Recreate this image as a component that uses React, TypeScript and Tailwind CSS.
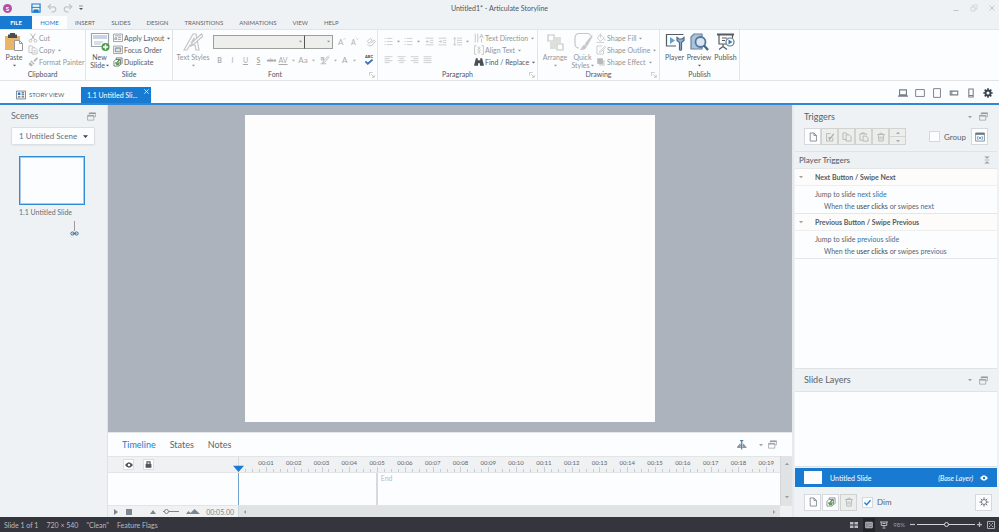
import type { ReactNode } from "react";

interface IconProps {
  children: ReactNode;
  box?: string;
  className?: string;
}

function Icon({ children, box = "0 0 16 16", className = "w-2.5 h-2.5" }: IconProps) {
  return (
    <svg
      viewBox={box}
      className={`shrink-0 ${className}`}
      fill="none"
      stroke="currentColor"
      strokeWidth="1.2"
      aria-hidden="true"
    >
      {children}
    </svg>
  );
}

function Caret({ className = "w-1 h-1" }: { className?: string }) {
  return (
    <svg viewBox="0 0 8 8" className={`shrink-0 ${className}`} fill="currentColor" aria-hidden="true">
      <path d="M0 2h8L4 6.5z" />
    </svg>
  );
}

function FloatIcon() {
  return (
    <Icon className="w-[9px] h-[9px]">
      <path d="M4 1.5h11v7h-2.5M4 1.5v3" />
      <path d="M4 2.5h11" strokeWidth="2" />
      <path d="M1 6h11v8.5H1z" />
      <path d="M1 7h11" strokeWidth="2" />
    </Icon>
  );
}

function PageIcon() {
  return (
    <Icon>
      <path d="M3.5 1.5h6l4 4v9h-10zM9.5 1.5v4h4" />
    </Icon>
  );
}

function TrashIcon() {
  return (
    <Icon>
      <path d="M2 4h12M6 4V2h4v2M3.5 4l1 10.5h7l1-10.5M6.5 7v5M9.5 7v5" />
    </Icon>
  );
}

function DuplicateIcon() {
  return (
    <Icon>
      <path d="M5 4V1.500h9.500V10L12 12.500" />
      <path d="M1.500 7l3-3H12v8l-2.500 2.500h-8z" fill="#fff" />
      <path d="M3 9l2.500 4H10l1-6-4 3-2-2z" fill="#5d9a4f" stroke="none" />
      <path d="M6 9l5-5" stroke="#4f8a45" strokeWidth="2" />
    </Icon>
  );
}

function GearIcon({ solid = false }: { solid?: boolean }) {
  return (
    <Icon className="w-2.5 h-2.5">
      <circle cx="8" cy="8" r="4" strokeWidth={solid ? 3 : 1.5} />
      <path
        d="M8 .5v3M8 12.500v3M.5 8h3M12.500 8h3M2.700 2.700l2.100 2.100M11.200 11.200l2.100 2.100M13.300 2.700l-2.100 2.100M4.800 11.200l-2.100 2.100"
        strokeWidth={solid ? 2.6 : 1.6}
      />
    </Icon>
  );
}

function EyeIcon() {
  return (
    <svg viewBox="0 0 16 12" className="w-2 h-1.5 shrink-0" fill="currentColor" aria-hidden="true">
      <path fillRule="evenodd" d="M0 6Q8-5 16 6Q8 17 0 6zM8 3.500a2.500 2.500 0 100 5 2.500 2.500 0 000-5z" />
    </svg>
  );
}

function RibbonGroup({
  label,
  width,
  launcher,
  children,
}: {
  label: string;
  width: string;
  launcher?: boolean;
  children: ReactNode;
}) {
  return (
    <section aria-label={label} className={`relative flex flex-col pt-0.5 border-r border-[#e2e4e6] shrink-0 ${width}`}>
      <div className="flex h-[37px] text-[#969696]">{children}</div>
      <div className="h-2.5 leading-[10px] text-center text-[#50555b]">{label}</div>
      {launcher && (
        <button aria-label={`${label} options`} className="absolute right-0.5 bottom-0.5 text-[#b5b5b5]">
          <Icon className="w-1.5 h-1.5">
            <path d="M1 10V1h9M6 6l8 8M14 8v6H8" strokeWidth="2" />
          </Icon>
        </button>
      )}
    </section>
  );
}

function BigButton({
  icon,
  label,
  second,
  caret,
  width,
  active,
}: {
  icon: ReactNode;
  label: string;
  second?: string;
  caret?: boolean;
  width: string;
  active?: boolean;
}) {
  return (
    <button className={`flex flex-col items-center shrink-0 ${width} ${active ? "text-[#555b61]" : ""}`}>
      {icon}
      <span className="leading-[9px] mt-px whitespace-nowrap">{label}</span>
      <span className="flex items-center gap-px h-[7px] leading-[7px]">
        {second}
        {caret && <Caret className="w-[3px] h-[3px]" />}
      </span>
    </button>
  );
}

function SmallButton({
  icon,
  label,
  caret,
  active,
}: {
  icon: ReactNode;
  label: string;
  caret?: boolean;
  active?: boolean;
}) {
  return (
    <button className={`flex items-center gap-px h-3 leading-3 whitespace-nowrap ${active ? "text-[#555b61]" : ""}`}>
      {icon}
      <span>{label}</span>
      {caret && <Caret className="w-[3px] h-[3px] ml-0.5" />}
    </button>
  );
}

const MENU = ["INSERT", "SLIDES", "DESIGN", "TRANSITIONS", "ANIMATIONS", "VIEW", "HELP"];

function TitleBar() {
  return (
    <header className="relative flex items-center h-4 shrink-0 px-[3px] text-[#4d5863]">
      <div className="w-[9px] h-[9px] rounded-full bg-[#b34fa6] text-white text-[6px] leading-[9px] text-center font-bold">
        S
      </div>
      <div className="flex items-center gap-1.5 ml-[19px]">
        <button aria-label="Save" className="text-[#187bd1]">
          <Icon>
            <path d="M1.500 1.500h13v13h-13z" strokeWidth="1.800" />
            <path d="M1 7h14" strokeWidth="1.500" />
            <path d="M4.500 15v-4h7v4" fill="#187bd1" />
          </Icon>
        </button>
        <button aria-label="Undo" className="text-[#c2c7cc]">
          <Icon>
            <path d="M6 2L2 6l4 4M2 6h8a4 4 0 010 8H7" strokeWidth="2" />
          </Icon>
        </button>
        <button aria-label="Redo" className="text-[#c2c7cc]">
          <Icon>
            <path d="M10 2l4 4-4 4M14 6H6a4 4 0 000 8h3" strokeWidth="2" />
          </Icon>
        </button>
        <button aria-label="Customize toolbar">
          <Icon className="w-1 h-1.5" box="0 0 8 12">
            <path d="M0 2h8" />
            <path d="M0 6h8l-4 4z" fill="currentColor" stroke="none" />
          </Icon>
        </button>
      </div>
      <h1 className="absolute inset-x-24 text-center pointer-events-none">Untitled1* - Articulate Storyline</h1>
      <div className="flex items-center gap-2.5 ml-auto text-[#c2c6ca]">
        <button aria-label="Minimize">
          <Icon className="w-2 h-2"><path d="M3 13h10" strokeWidth="2" /></Icon>
        </button>
        <button aria-label="Restore">
          <Icon className="w-2 h-2"><path d="M2 6h8v8H2zM6 6V2h8v8h-4" /></Icon>
        </button>
        <button aria-label="Close">
          <Icon className="w-2 h-2"><path d="M3 3l10 10M13 3L3 13" strokeWidth="2" /></Icon>
        </button>
      </div>
    </header>
  );
}

function MenuTabs() {
  return (
    <nav className="flex h-[13px] shrink-0 text-[6px] leading-[13px] text-[#5b656e]">
      <button className="w-8 bg-[#187bd1] text-white font-bold">FILE</button>
      <button className="w-[35px] bg-[#fcfdfe] text-[#187bd1]">HOME</button>
      <div className="flex gap-4 pl-2">
        {MENU.map((m) => (
          <button key={m}>{m}</button>
        ))}
      </div>
    </nav>
  );
}

function AlignIcon({ d }: { d: string }) {
  return (
    <Icon className="w-[9px] h-[9px]">
      <path d={d} strokeWidth="1.400" />
    </Icon>
  );
}

function Ribbon() {
  return (
    <div className="flex h-[52px] shrink-0 bg-[#fcfdfe] border-y border-[#e2e4e6]">
      <RibbonGroup label="Clipboard" width="w-[86px]">
        <BigButton
          label="Paste"
          caret
          active
          width="w-7"
          icon={
            <Icon box="0 0 20 20" className="w-5 h-5">
              <path d="M1 4h15v14H1z" fill="#e9b566" stroke="none" />
              <path d="M4 2.500h2V1h5v1.500h2V6H4z" fill="#4a4e54" stroke="none" />
              <path d="M10.500 8.500h5l3 3v7h-8zM15.500 8.500v3h3" fill="#fff" stroke="#999" strokeWidth="1" />
            </Icon>
          }
        />
        <div className="flex flex-col">
          <SmallButton
            label="Cut"
            icon={
              <Icon className="w-2.5 h-2.5 text-[#b5b5b5]">
                <path d="M4 1l7 10M12 1L5 11" strokeWidth="1.600" />
                <circle cx="4" cy="12.500" r="2.200" />
                <circle cx="12" cy="12.500" r="2.200" />
              </Icon>
            }
          />
          <SmallButton
            label="Copy"
            caret
            icon={
              <Icon className="w-2.5 h-2.5 text-[#b5b5b5]">
                <path d="M1.500 1.500h5l3 3V12h-8z" />
                <path d="M6.500 4.500h5l3 3v7h-8z" fill="#fff" />
                <path d="M8.500 9h4M8.500 11.500h4" />
              </Icon>
            }
          />
          <SmallButton
            label="Format Painter"
            icon={
              <Icon className="w-2.5 h-2.5 text-[#b5b5b5]">
                <path d="M9 6l5-5 1.500 1.500-5 5" fill="currentColor" />
                <path d="M5 5l6 6-2 1-5-5zM3 8l5 5-3 2-4-3z" fill="currentColor" stroke="none" />
              </Icon>
            }
          />
        </div>
      </RibbonGroup>

      <RibbonGroup label="Slide" width="w-[87px]">
        <BigButton
          label="New"
          second="Slide"
          caret
          active
          width="w-[27px]"
          icon={
            <Icon box="0 0 20 20" className="w-5 h-5">
              <path d="M1.500 1.500h17v13h-17z" fill="#fff" stroke="#9aa2ac" />
              <path d="M3 3h14v4H3z" fill="#c9d3e3" stroke="none" />
              <path d="M4 10h9M4 12h7" stroke="#b5bcc5" strokeWidth="1" />
              <circle cx="15.500" cy="15" r="4" fill="#4b9b46" stroke="none" />
              <path d="M15.500 12.500v5M13 15h5" stroke="#fff" strokeWidth="1.500" />
            </Icon>
          }
        />
        <div className="flex flex-col">
          <SmallButton
            label="Apply Layout"
            caret
            active
            icon={
              <Icon className="w-2.5 h-2.5 text-[#858b91]">
                <path d="M.7 1.700h14.600v12H.7z" />
                <path d="M3 4.500h10M3 7.500h3v3H3zM8 7.500h5M8 10.500h5" />
              </Icon>
            }
          />
          <SmallButton
            label="Focus Order"
            active
            icon={
              <Icon className="w-2.5 h-2.5 text-[#858b91]">
                <path d="M.7 1.700h14.600v12H.7z" />
                <path d="M3.500 4.500h9v6.500h-9z" fill="#a9afb5" />
                <path d="M5 7h6M5 9h6" stroke="#fff" />
              </Icon>
            }
          />
          <SmallButton label="Duplicate" active icon={<DuplicateIcon />} />
        </div>
      </RibbonGroup>

      <RibbonGroup label="Font" width="w-[205px]" launcher>
        <BigButton
          label="Text Styles"
          caret
          width="w-10"
          icon={
            <Icon box="0 0 20 20" className="w-5 h-5 text-[#c4c4c4]">
              <path d="M1 18L10 2l3 0 3 16h-3l-1-5H7l-3 5zM8.500 10.500h3L11 6.500z" />
              <path d="M18.500 2l-9 8-1.500 4 3-2 9-8z" fill="#fff" />
            </Icon>
          }
        />
        <div className="flex flex-col gap-1.5 pt-[3px]">
          <div className="flex items-center text-[#b2b2b2]">
            <div className="relative text-[#8d8d8d]">
              <select aria-label="Font family" disabled className="block w-[92px] h-3.5 border border-[#9c9f9c] bg-[#eeefed] appearance-none" />
              <Caret className="absolute right-[3px] top-[5px] w-[3px] h-[3px]" />
            </div>
            <div className="relative text-[#8d8d8d]">
              <select aria-label="Font size" disabled className="block w-[29px] h-3.5 border border-[#9c9f9c] border-l-[#555] bg-[#eeefed] appearance-none -ml-px" />
              <Caret className="absolute right-[3px] top-[5px] w-[3px] h-[3px]" />
            </div>
            <button aria-label="Grow font" className="flex w-3 ml-[5px] text-[8px]">A<Icon className="w-[3px] h-1"><path d="M2 11l6-6 6 6" strokeWidth="3" /></Icon></button>
            <button aria-label="Shrink font" className="flex w-3 ml-px">A<Icon className="w-[3px] h-1"><path d="M2 5l6 6 6-6" strokeWidth="3" /></Icon></button>
            <button aria-label="Clear formatting" className="ml-[3px] text-[#c6c6c6]">
              <Icon>
                <path d="M2 7l5-5 3 3-5 5zM8 10l5-5 2 2-6 7H5l-3-3" strokeWidth="1.600" />
              </Icon>
            </button>
          </div>
          <div className="flex items-center h-2.5 text-[#aaaaaa]">
            <button className="w-[13px] font-bold">B</button>
            <button className="w-[13px] italic">I</button>
            <button className="w-[13px] underline">U</button>
            <button className="w-[13px] font-bold underline">S</button>
            <button className="w-[13px] line-through text-[6px]">abc</button>
            <button aria-label="Character spacing" className="flex items-center gap-1 w-5">
              <span className="underline w-2.5">AV</span><Caret className="w-[3px] h-[3px]" />
            </button>
            <button aria-label="Change case" className="flex items-center gap-1 w-[22px] text-[8px]">
              <span className="w-2.5">Aa</span><Caret className="w-[3px] h-[3px]" />
            </button>
            <button aria-label="Highlight" className="flex items-center gap-1 w-[22px]">
              <Icon className="w-2.5 h-2.5"><path d="M14 1L6 9l-2 4 4-2 7-8M1 14h9M1 4h5v4H2V6h4" /></Icon>
              <Caret className="w-[3px] h-[3px]" />
            </button>
            <button aria-label="Font color" className="flex items-center gap-1.5 w-[22px] text-[8px]">
              A<Caret className="w-[3px] h-[3px]" />
            </button>
            <button aria-label="Spelling" className="flex flex-col items-center">
              <span className="text-[4px] leading-[4px] font-bold text-[#444]">ABC</span>
              <Icon box="0 0 16 10" className="w-2.5 h-1.5 text-[#3c6fc0]"><path d="M2 4l4 4 8-7" strokeWidth="3" /></Icon>
            </button>
          </div>
        </div>
      </RibbonGroup>

      <RibbonGroup label="Paragraph" width="w-40" launcher>
        <div className="flex flex-col gap-2 pt-1 pl-1.5 w-24 shrink-0 text-[#c4c4c4]">
          <div className="flex items-center gap-1 h-2.5">
            {["Bullets", "Numbering"].map((b) => (
              <button key={b} aria-label={b} className="flex items-center gap-1 w-4">
                <AlignIcon d="M1 2.500h2M1 8h2M1 13.500h2M5 2.500h10M5 8h10M5 13.500h10" />
                <Caret className="w-[3px] h-[3px] text-[#999]" />
              </button>
            ))}
            <button aria-label="Decrease indent" className="ml-px"><AlignIcon d="M1 2h14M1 14h14M9 6h6M9 10h6M8 8H2M5 5L2 8l3 3" /></button>
            <button aria-label="Increase indent"><AlignIcon d="M1 2h14M1 14h14M9 6h6M9 10h6M1 8h6M4 5l3 3-3 3" /></button>
            <button aria-label="Line spacing" className="flex items-center gap-1 ml-0.5">
              <AlignIcon d="M7 2h9M7 6h9M7 10h9M7 14h9M3 1v14M1 4l2-3 2 3M1 12l2 3 2-3" />
              <Caret className="w-[3px] h-[3px] text-[#999]" />
            </button>
          </div>
          <div className="flex items-center gap-1 h-2.5">
            <button aria-label="Align left"><AlignIcon d="M1 3h14M1 6.500h9M1 10h14M1 13.500h9" /></button>
            <button aria-label="Align center"><AlignIcon d="M1 3h14M4 6.500h8M1 10h14M4 13.500h8" /></button>
            <button aria-label="Align right"><AlignIcon d="M1 3h14M6 6.500h9M1 10h14M6 13.500h9" /></button>
            <button aria-label="Justify"><AlignIcon d="M1 3h14M1 6.500h14M1 10h14M1 13.500h14" /></button>
          </div>
        </div>
        <div className="flex flex-col">
          <SmallButton
            label="Text Direction"
            caret
            icon={<Icon className="w-2.5 h-2.5 text-[#b5b5b5]"><path d="M2 1v14M6 1v14M9 8l3-6 3 6M10 6h4M12 9v6" /></Icon>}
          />
          <SmallButton
            label="Align Text"
            caret
            icon={<Icon className="w-2.5 h-2.5 text-[#b5b5b5]"><path d="M4 1H1v14h3M12 1h3v14h-3M8 2v4M6 4l2 2 2-2M5 8h6M8 14v-4M6 12l2-2 2 2" /></Icon>}
          />
          <SmallButton
            label="Find / Replace"
            caret
            active
            icon={
              <Icon>
                <path d="M3 2h3v3h4V2h3l3 12H9.500v-4h-3v4H0z" fill="#4a4e54" stroke="none" />
              </Icon>
            }
          />
        </div>
      </RibbonGroup>

      <RibbonGroup label="Drawing" width="w-[122px]" launcher>
        <BigButton
          label="Arrange"
          caret
          width="w-[34px]"
          icon={
            <Icon box="0 0 20 20" className="w-5 h-5 text-[#c6c6c6]">
              <path d="M3 3h6v6H3zM12 12h6v6h-6z" />
              <path d="M9 5h7v7H9zM5 10h7v7H5z" fill="#dededc" stroke="none" />
            </Icon>
          }
        />
        <BigButton
          label="Quick"
          second="Styles"
          caret
          width="w-[21px]"
          icon={
            <Icon box="0 0 20 20" className="w-5 h-5 text-[#c6c6c6]">
              <path d="M17 3.500a2 2 0 00-2-2H6a4 4 0 00-4 4V12a4 4 0 004 4" fill="none" />
              <path d="M19 3l-7 9 2 2 5-9zM12 13c-3 0-2 3-5 4.500 4 1 6-1 6.500-3z" fill="currentColor" strokeWidth=".5" />
            </Icon>
          }
        />
        <div className="flex flex-col pl-[3px]">
          <SmallButton
            label="Shape Fill"
            caret
            icon={<Icon className="w-2.5 h-2.5 text-[#c0c0c0]"><path d="M7 2l6 6-6 5-5-5zM7 2v6M14 9v3M1 15h12" /></Icon>}
          />
          <SmallButton
            label="Shape Outline"
            caret
            icon={<Icon className="w-2.5 h-2.5 text-[#c0c0c0]"><path d="M12 8v6.500H1.500v-13H10M5 11l9-9 1.500 1.500-8 8z" /></Icon>}
          />
          <SmallButton
            label="Shape Effect"
            caret
            icon={
              <Icon className="w-2.5 h-2.5 text-[#c6c6c6]">
                <path d="M5 5h9v9H5z" fill="#d8d8d8" stroke="none" />
                <path d="M2 2h9v9H2z" fill="#b9b9b7" stroke="none" />
              </Icon>
            }
          />
        </div>
      </RibbonGroup>

      <RibbonGroup label="Publish" width="w-20">
        <BigButton
          label="Player"
          active
          width="w-[29px]"
          icon={
            <Icon box="0 0 20 20" className="w-5 h-5">
              <path d="M11 14H1.500V2.500h17" />
              <path d="M5 5l5 3.500L5 12z" fill="#5fa3d5" stroke="none" />
              <path d="M12 5.500v3l2.500 2v7c0 1 2 1 2 0v-7l2.500-2v-3L17 7h-3z" fill="#93b4d6" stroke="#56677c" />
            </Icon>
          }
        />
        <BigButton
          label="Preview"
          caret
          active
          width="w-5"
          icon={
            <Icon box="0 0 20 20" className="w-5 h-5">
              <path d="M2 5l3-3h8v15H2z" fill="#a9c4df" stroke="#6f8297" />
              <circle cx="11.500" cy="10" r="5" fill="#d6e6f3" stroke="#56779b" strokeWidth="1.800" />
              <path d="M15 13.500l4 4.500" stroke="#46688c" strokeWidth="2.400" />
            </Icon>
          }
        />
        <BigButton
          label="Publish"
          active
          width="w-[33px]"
          icon={
            <Icon box="0 0 20 20" className="w-5 h-5">
              <path d="M1 2.500h17" strokeWidth="2" />
              <path d="M3 3v9h7M16.500 3v3M6 6h5M6 8.500h3M7 12v3M3 17.500l4-3 4 3" />
              <circle cx="14" cy="10" r="4" fill="#fff" stroke="#6e7883" />
              <path d="M12.500 7.500l4 2.500-4 2.500z" fill="#2e7fc0" stroke="none" />
            </Icon>
          }
        />
      </RibbonGroup>
    </div>
  );
}

function DocumentTabs() {
  return (
    <div className="flex items-end h-6 shrink-0 bg-[#fcfdfe] border-b-2 border-[#3087d5] text-[#59636d]">
      <button className="flex items-center gap-[3px] h-4 w-[81px] pl-4 text-[6px]">
        <Icon>
          <path d="M.7 1.700h14.600v12.600H.7z" />
          <path d="M3 4h4v4H3z" fill="#187bd1" stroke="none" />
          <path d="M9 4.500h4M9 7.500h4M3 11h4M9 11h4" strokeWidth="1.800" />
        </Icon>
        STORY VIEW
      </button>
      <div className="flex h-4 w-[70px] pl-1.5 bg-[#187bd1] text-white">
        <button className="text-[7px] leading-[17px] whitespace-nowrap">1.1 Untitled Sli...</button>
        <button aria-label="Close tab" className="self-start mt-0.5 ml-auto mr-0.5">
          <Icon className="w-[5px] h-[5px]"><path d="M1 1l14 14M15 1L1 15" strokeWidth="2.500" /></Icon>
        </button>
      </div>
      <div className="flex items-center gap-[7px] h-[17px] ml-auto mr-1.5 mb-0.5 text-[#757e87]">
        <button aria-label="Desktop"><Icon className="w-2.5 h-2.5"><path d="M2.500 3h11v8h-11zM0 13h16" strokeWidth="1.800" /></Icon></button>
        <button aria-label="Tablet landscape"><Icon className="w-2.5 h-2.5"><path d="M1 2.500h14v11H1z" strokeWidth="1.500" /></Icon></button>
        <button aria-label="Tablet portrait"><Icon className="w-2.5 h-2.5"><path d="M2.500 1h11v14h-11z" strokeWidth="1.500" /></Icon></button>
        <button aria-label="Phone landscape"><Icon className="w-2.5 h-2.5"><path d="M2 5h12v6H2zM4.500 5v6" strokeWidth="1.700" /></Icon></button>
        <button aria-label="Phone portrait"><Icon className="w-2.5 h-2.5"><path d="M4.500 1.500h7v13h-7zM4.500 12h7" strokeWidth="1.700" /></Icon></button>
        <button aria-label="Player settings" className="text-[#39434d]"><GearIcon solid /></button>
      </div>
    </div>
  );
}

function Scenes() {
  return (
    <aside className="flex flex-col w-[108px] shrink-0 px-[11px] bg-[#eff2f4] border-r border-[#e0e3e6] text-[#66707a]">
      <div className="flex items-center justify-between h-[22px] text-[9px]">
        <h2>Scenes</h2>
        <button aria-label="Undock scenes" className="text-[#8f979e]"><FloatIcon /></button>
      </div>
      <div className="relative w-[84px]">
        <select
          aria-label="Scene"
          className="block w-full h-[18px] pl-[7px] text-[8px] bg-[#fcfdfe] border border-[#dcdfe1] rounded-xs shadow-xs appearance-none"
        >
          <option>1 Untitled Scene</option>
        </select>
        <Caret className="absolute right-[7px] top-[7px] w-[5px] h-[5px] text-[#3d4248] pointer-events-none" />
      </div>
      <div className="flex flex-col pl-2 pt-[11px]">
        <button aria-label="1.1 Untitled Slide" className="w-[66px] h-[49px] bg-[#fcfdfe] border border-[#2f8ad8] outline-1 -outline-offset-2 outline-[#a9cbe9]" />
        <p className="mt-0.5 leading-[10px]">1.1 Untitled Slide</p>
        <div className="flex flex-col items-center self-end mt-1 mr-[17px]">
          <div className="w-px h-2.5 bg-[#a3979c]" />
          <Icon box="0 0 18 10" className="w-[9px] h-[5px] text-[#356f9f]">
            <rect x="1.500" y="2" width="7" height="6" rx="3" strokeWidth="2" />
            <rect x="9.500" y="2" width="7" height="6" rx="3" strokeWidth="2" />
            <path d="M5 5h8" strokeWidth="1.500" />
          </Icon>
        </div>
      </div>
    </aside>
  );
}

const SECONDS = Array.from({ length: 19 }, (_, i) => i + 1);
const END_SECOND = 5;
const VISIBLE_SECONDS = 19.5;

function Timeline() {
  return (
    <section className="flex flex-col shrink-0 bg-[#fcfdfe] border-t border-[#e4e6e8]">
      <div className="flex items-center h-[23px] pl-3.5 pr-[15px] text-[9px] text-[#5c6670]">
        <div className="flex gap-3.5">
          <button className="text-[#187bd1]">Timeline</button>
          <button>States</button>
          <button>Notes</button>
        </div>
        <button aria-label="Snap" className="ml-auto mr-3">
          <Icon>
            <path d="M0 12l5-6v6zM10 6l5 6h-5zM2 12h12M4 9h8" fill="#8b949c" stroke="#8b949c" />
            <path d="M7.500 1v14M5 1h5" stroke="#4878b0" strokeWidth="1.800" />
          </Icon>
        </button>
        <Caret className="w-1 h-1 mr-[5px] text-[#9aa1a7]" />
        <button aria-label="Undock timeline" className="text-[#8f979e]"><FloatIcon /></button>
      </div>

      <div className="flex">
        <div className="flex flex-col flex-1 min-w-0">
          <div className="flex h-[17px] bg-[#eff1f2] border-y border-[#e2e5e6]">
            <div className="flex items-center gap-[9px] w-[130px] shrink-0 pl-[15px] text-[#4c565f]">
              <button aria-label="Show all" className="flex items-center justify-center w-[11px] h-[11px] bg-white border border-[#dcdfe1]"><EyeIcon /></button>
              <button aria-label="Lock all" className="flex items-center justify-center w-[11px] h-[11px] bg-white border border-[#dcdfe1]">
                <Icon className="w-[7px] h-[7px]"><path d="M2 7h12v8H2z" fill="currentColor" /><path d="M4.500 7V2h7v5" strokeWidth="2.500" /></Icon>
              </button>
            </div>
            <div className="relative flex flex-1 min-w-0 border-l border-[#d5d9db]">
              <Caret className="absolute -left-[6px] top-[6px] w-[11px] h-[11px] z-10 text-[#187bd1]" />
              <div className="flex justify-center items-end w-[13px] shrink-0">
                <i className="w-px h-[3px] bg-[#c9cdd0]" />
              </div>
              {SECONDS.map((s) => (
                <div key={s} className="flex flex-col flex-1 min-w-0 justify-between">
                  <span className="flex justify-center h-2.5 text-[6px] leading-[12px] text-[#5c666f]">{`00:${String(s).padStart(2, "0")}`}</span>
                  <div className="flex items-end">
                    {[0, 1, 2, 3].map((q) => (
                      <i key={q} className={`flex-1 border-l border-[#c9cdd0] ${q === 2 ? "h-[5px]" : "h-[3px]"}`} />
                    ))}
                  </div>
                </div>
              ))}
            </div>
          </div>
          <div className="flex h-8">
            <div className="w-[130px] shrink-0" />
            <div className="flex flex-1 min-w-0 border-l border-[#71a3d0]">
              <div
                className="border-r-2 border-[#d7dadd] shrink-0"
                style={{ width: `${(END_SECOND / VISIBLE_SECONDS) * 100}%` }}
              />
              <span className="pl-[3px] leading-[10px] text-[#b5babf]">End</span>
            </div>
          </div>
        </div>
        <div className="flex flex-col items-center justify-between w-3 py-1.5 bg-[#dfe3e3] border-l border-[#d3d7d8] text-[#969d9f]">
          <Caret className="w-1 h-1 rotate-180" />
          <Caret className="w-1 h-1" />
        </div>
      </div>

      <div className="flex h-3 bg-[#eff1f2] border-t border-[#e2e5e6]">
        <div className="flex items-center w-[130px] shrink-0 pl-1.5 text-[#7c868e]">
          <button aria-label="Play"><Icon box="0 0 8 12" className="w-1 h-1.5"><path d="M0 0l8 6-8 6z" fill="currentColor" stroke="none" /></Icon></button>
          <button aria-label="Stop" className="w-1.5 h-1.5 ml-2 bg-[#7c868e]" />
          <Icon box="0 0 12 8" className="w-1.5 h-1 ml-[18px]"><path d="M0 8l6-8 6 8z" fill="currentColor" stroke="none" /></Icon>
          <input
            type="range"
            aria-label="Timeline zoom"
            defaultValue={10}
            className="w-4 h-1.5 mx-[7px] appearance-none bg-linear-to-r from-[#7c868e] to-[#7c868e] bg-[length:100%_1px] bg-center bg-no-repeat [&::-webkit-slider-thumb]:appearance-none [&::-webkit-slider-thumb]:size-[5px] [&::-webkit-slider-thumb]:rounded-full [&::-webkit-slider-thumb]:border [&::-webkit-slider-thumb]:border-[#7c868e] [&::-webkit-slider-thumb]:bg-[#eff1f2]"
          />
          <Icon box="0 0 28 10" className="w-3.5 h-[5px]"><path d="M0 10l5-6 4 4 8-8 11 10z" fill="currentColor" stroke="none" /></Icon>
          <output className="ml-auto mr-1">00:05.00</output>
        </div>
        <div className="flex items-center justify-between flex-1 px-1 bg-[#dfe3e3] border-l border-[#cfd4d6] text-[#969d9f]">
          <Caret className="w-1 h-1 rotate-90" />
          <Caret className="w-1 h-1 -rotate-90" />
        </div>
        <div className="w-3" />
      </div>
    </section>
  );
}

function Trigger({ title, target }: { title: string; target: string }) {
  return (
    <div>
      <h4 className="flex items-center h-[17px] pl-1 bg-[#fdfcfa] border-b border-[#edeef0] font-bold text-[#525c66]">
        <Caret className="w-1 h-1 mr-3 text-[#9aa1a7]" />
        {title}
      </h4>
      <div className="h-[28px] pt-0.5 pl-5 leading-[12px] border-b border-[#e4e7ea] whitespace-nowrap">
        <p>
          Jump to slide <a href="#slide" className="text-[#3b6f9c]">{target} slide</a>
        </p>
        <p className="pl-[9px]">
          When the <span className="text-[#39434d]">user clicks</span> or swipes <a href="#event" className="text-[#3b6f9c]">{target}</a>
        </p>
      </div>
    </div>
  );
}

function ToolButton({ label, off, children }: { label: string; off?: boolean; children: ReactNode }) {
  return (
    <button
      aria-label={label}
      className={`flex items-center justify-center w-[17px] h-[17px] border ${
        off ? "bg-[#eceeec] border-[#d0d3d2] text-[#a7acae]" : "bg-[#fcfdfe] border-[#d5d9db] text-[#6b757e]"
      }`}
    >
      {children}
    </button>
  );
}

function TriggersPanel() {
  return (
    <section className="flex flex-col flex-1 min-h-0">
      <div className="h-[47px] shrink-0 px-[9px] bg-[#eff2f4] border-b border-[#dfe3e5]">
        <div className="flex items-center h-[23px] text-[9px]">
          <h2>Triggers</h2>
          <Caret className="w-1 h-1 ml-auto mr-[7px] text-[#9aa1a7]" />
          <button aria-label="Undock triggers" className="text-[#8f979e]"><FloatIcon /></button>
        </div>
        <div className="flex items-center">
          <div className="flex">
            <ToolButton label="New trigger"><PageIcon /></ToolButton>
            <ToolButton label="Edit trigger" off>
              <Icon><path d="M12.500 9v5.500h-10v-12H9" /><path d="M6 8l1.500 3.500L14 3" strokeWidth="2.200" /></Icon>
            </ToolButton>
            <ToolButton label="Copy trigger" off>
              <Icon><path d="M1.500 1.500h5l3 3V12h-8z" /><path d="M6.500 4.500h5l3 3v7h-8z" fill="#eceeec" /></Icon>
            </ToolButton>
            <ToolButton label="Paste trigger" off>
              <Icon><path d="M6 13H1.500V3H12v2M4.500 3V1.500h4V3" /><path d="M6.500 6.500h5l3 3v5h-8z" fill="#eceeec" /></Icon>
            </ToolButton>
            <ToolButton label="Delete trigger" off><TrashIcon /></ToolButton>
            <div className="flex flex-col w-[17px] h-[17px] border border-[#d0d3d2] bg-[#eceeec] text-[#a7acae]">
              <button aria-label="Move up" className="flex-1 flex items-center justify-center border-b border-[#d0d3d2]"><Caret className="w-1 h-1 rotate-180" /></button>
              <button aria-label="Move down" className="flex-1 flex items-center justify-center"><Caret className="w-1 h-1" /></button>
            </div>
          </div>
          <label className="flex items-center gap-1 ml-auto mr-[5px] text-[8px]">
            <input type="checkbox" className="w-[11px] h-[11px] bg-[#fcfdfe] border border-[#d5d9db] appearance-none" />
            Group
          </label>
          <ToolButton label="Manage variables">
            <Icon>
              <path d="M1 1.500h14v13H1z" />
              <path d="M1 3h14" strokeWidth="3" />
              <path d="M5 6.500q-2 3 0 6M11 6.500q2 3 0 6M6.500 8l3 3.500M9.500 8l-3 3.500" stroke="#2b7cc4" />
            </Icon>
          </ToolButton>
        </div>
      </div>
      <div className="flex flex-col flex-1 bg-[#fcfdfe]">
        <div className="flex items-center h-[17px] pl-1 pr-1.5 text-[8px] font-medium bg-[#eef1f3] border-b border-[#e4e7ea]">
          <h3>Player Triggers</h3>
          <button aria-label="Collapse all" className="ml-auto text-[#8f979e]">
            <Icon className="w-2 h-2"><path d="M3 1.500h10M3 14.500h10M3 8h10" /><path d="M5 2h6L8 6zM5 14h6L8 10z" fill="currentColor" stroke="none" /></Icon>
          </button>
        </div>
        <Trigger title="Next Button / Swipe Next" target="next" />
        <Trigger title="Previous Button / Swipe Previous" target="previous" />
      </div>
    </section>
  );
}

function LayersPanel() {
  return (
    <section className="flex flex-col shrink-0">
      <div className="flex items-center h-6 px-[9px] text-[9px] bg-[#eff2f4] border-y border-[#dfe3e5]">
        <h2>Slide Layers</h2>
        <Caret className="w-1 h-1 ml-auto mr-[7px] text-[#9aa1a7]" />
        <button aria-label="Undock layers" className="text-[#8f979e]"><FloatIcon /></button>
      </div>
      <div className="h-[75px] bg-[#fcfdfe] border-b border-[#dfe3e5]" />
      <div className="flex items-center h-[19px] mt-px px-[9px] bg-[#187bd1] text-white">
        <div className="w-[18px] h-[13px] mr-2 bg-[#fcfdfe]" />
        Untitled Slide
        <em className="ml-auto mr-[7px]">(Base Layer)</em>
        <EyeIcon />
      </div>
      <div className="flex items-center gap-px h-[30px] px-[9px]">
        <ToolButton label="New layer"><PageIcon /></ToolButton>
        <ToolButton label="Duplicate layer"><DuplicateIcon /></ToolButton>
        <ToolButton label="Delete layer" off><TrashIcon /></ToolButton>
        <label className="flex items-center gap-1 ml-1 text-[8px]">
          <span className="relative flex">
            <input type="checkbox" defaultChecked className="w-[11px] h-[11px] bg-[#fcfdfe] border border-[#d5d9db] appearance-none peer" />
            <Icon className="absolute left-0.5 top-0.5 w-[7px] h-[7px] text-[#187bd1] invisible peer-checked:visible pointer-events-none">
              <path d="M1 8l5 5 9-10" strokeWidth="3" />
            </Icon>
          </span>
          Dim
        </label>
        <div className="ml-auto -mr-1"><ToolButton label="Layer properties"><GearIcon /></ToolButton></div>
      </div>
    </section>
  );
}

function StatusBar() {
  return (
    <footer className="flex items-center h-[15px] shrink-0 px-1 bg-[#35353d] text-[#b9babf]">
      <div className="flex gap-2">
        <span>Slide 1 of 1</span>
        <span>720 × 540</span>
        <span>"Clean"</span>
        <span>Feature Flags</span>
      </div>
      <div className="flex items-center gap-[5px] ml-auto">
        <button aria-label="Story view"><Icon className="w-2 h-2"><path d="M0 2h7v5H0zM9 2h7v5H9zM0 9h7v5H0zM9 9h7v5H9z" fill="currentColor" stroke="none" /></Icon></button>
        <button aria-label="Slide view" className="flex items-center justify-center w-3 h-3.5 bg-[#24242b]">
          <Icon className="w-2 h-2"><path d="M1.500 2.500h13v11h-13z" fill="#77787f" strokeWidth="2" /><path d="M6 3v10M8 6h5M8 9h5" strokeWidth="1.500" /></Icon>
        </button>
        <button aria-label="Preview"><Icon className="w-2 h-2"><path d="M0 2h16M2.500 2v7h11V2M8 9v3M5 14h6M5 5h6" strokeWidth="2" /></Icon></button>
        <span className="text-[6px] text-[#9c9da3]">98%</span>
        <button aria-label="Zoom out" className="leading-none"><Icon className="w-[5px] h-[5px]"><path d="M0 8h16" strokeWidth="4" /></Icon></button>
        <input
          type="range"
          aria-label="Zoom"
          className="w-[58px] h-1.5 -mx-[3px] appearance-none bg-linear-to-r from-[#d5d5d9] to-[#d5d5d9] bg-[length:100%_1px] bg-center bg-no-repeat [&::-webkit-slider-thumb]:appearance-none [&::-webkit-slider-thumb]:size-[5px] [&::-webkit-slider-thumb]:rounded-full [&::-webkit-slider-thumb]:border [&::-webkit-slider-thumb]:border-[#d5d5d9] [&::-webkit-slider-thumb]:bg-[#35353d]"
        />
        <button aria-label="Zoom in"><Icon className="w-[5px] h-[5px]"><path d="M0 8h16M8 0v16" strokeWidth="4" /></Icon></button>
        <button aria-label="Fit to window"><Icon className="w-2 h-2"><path d="M1 1h14v14H1zM4 4l3 3M12 4L9 7M4 12l3-3M12 12L9 9" strokeWidth="1.800" /></Icon></button>
      </div>
    </footer>
  );
}

export default function App() {
  return (
    <div className="flex flex-col h-screen overflow-hidden bg-[#eff2f4] text-[7px] leading-[10px] font-['Lato','Noto_Sans',sans-serif]">
      <TitleBar />
      <MenuTabs />
      <Ribbon />
      <DocumentTabs />
      <div className="flex flex-1 min-h-0">
        <Scenes />
        <main className="flex flex-col flex-1 min-w-0">
          <div className="flex items-center justify-center flex-1 min-h-0 p-2.5 bg-[#adb3bd]">
            <div className="h-full aspect-4/3 bg-[#fdfdfe]" />
          </div>
          <Timeline />
        </main>
        <aside className="flex flex-col w-[207px] shrink-0 pl-px pr-0.5 border-l-2 border-[#e6eaed] text-[#59636d]">
          <TriggersPanel />
          <LayersPanel />
        </aside>
      </div>
      <StatusBar />
    </div>
  );
}
